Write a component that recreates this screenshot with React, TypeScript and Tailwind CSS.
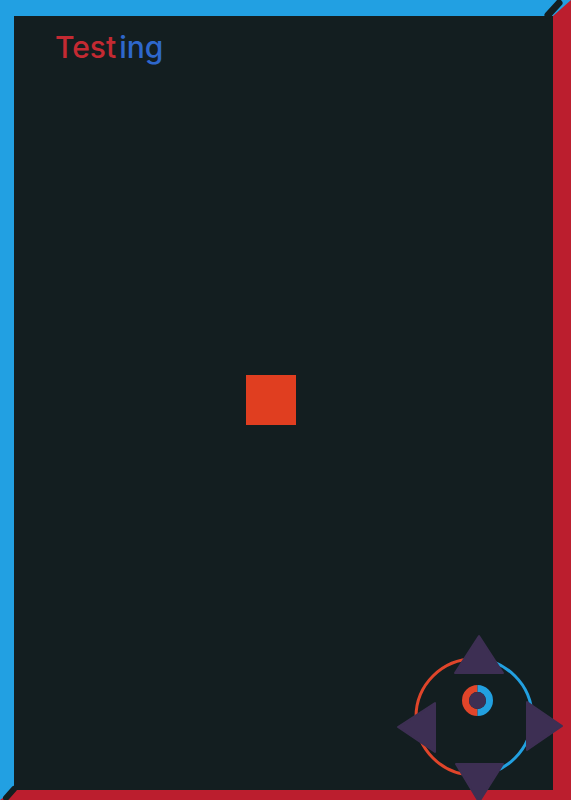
export default function App() {
  return (
    <div className="relative h-[800px] w-full overflow-hidden bg-[#131e20]">
      {/* frame */}
      <div className="h-full w-full border-t-[16px] border-l-[14px] border-r-[18px] border-b-[10px] border-t-[#22a0e2] border-l-[#22a0e2] border-r-[#bb1e2e] border-b-[#bb1e2e] bg-[#131e20]">
        <h1
          className="ml-[41px] mt-[16px] text-[30px] font-medium leading-none"
          style={{ fontFamily: "Inter, 'Noto Sans', sans-serif" }}
        >
          <span className="text-[#c42a32]">Test</span>
          <span className="ml-[3px] text-[#2e67cc]">ing</span>
        </h1>
      </div>

      {/* corner grooves */}
      <svg className="pointer-events-none absolute left-0 top-0" width="571" height="800" viewBox="0 0 571 800">
        <line x1="548" y1="15" x2="559" y2="3" stroke="#131e20" strokeWidth="7" strokeLinecap="round" />
        <line x1="14" y1="789" x2="6" y2="798" stroke="#131e20" strokeWidth="6" strokeLinecap="round" />
      </svg>

      {/* player */}
      <div className="absolute left-[246px] top-[375px] h-[50px] w-[50px] bg-[#e03e20]" />

      {/* joystick */}
      <svg
        className="pointer-events-none absolute left-[390px] top-[620px]"
        width="181"
        height="180"
        viewBox="390 620 181 180"
      >
        <path d="M 474 659 A 58 58 0 0 0 474 775" fill="none" stroke="#e0452a" strokeWidth="3" />
        <path d="M 474 659 A 58 58 0 0 1 474 775" fill="none" stroke="#22a0e0" strokeWidth="3" />

        <path d="M 477.5 688.5 A 12 12 0 0 0 477.5 712.5" fill="none" stroke="#e0452a" strokeWidth="7" />
        <path d="M 477.5 688.5 A 12 12 0 0 1 477.5 712.5" fill="none" stroke="#22a0e0" strokeWidth="7" />
        <circle cx="477.5" cy="700.5" r="8.5" fill="#3d2f53" />

        <g fill="#3d2f53" stroke="#3d2f53" strokeWidth="2" strokeLinejoin="round">
          <polygon points="479,636 455,673 503,673" />
          <polygon points="456,764 503,764 479,802" />
          <polygon points="398,727 435,703 435,752" />
          <polygon points="527,702 527,750 562,726" />
        </g>
      </svg>
    </div>
  );
}
